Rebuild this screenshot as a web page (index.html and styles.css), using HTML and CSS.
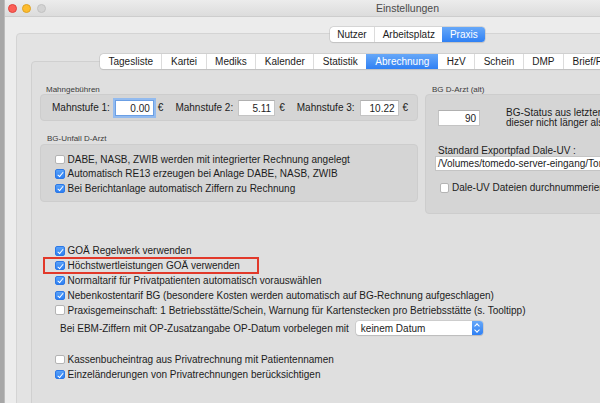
FILE: index.html
```
<!doctype html>
<html>
	<head>
		<title>Einstellungen</title>
		<meta charset="utf-8">
	<link rel="stylesheet" href="styles.css">
	</head>
	<body>
		<div class="window">
			<div class="titlebar">
				<div class="lights">
					<span class="light red"></span>
					<span class="light yellow"></span>
					<span class="light off"></span>
				</div>
				<div class="title">Einstellungen</div>
				<div></div>
			</div>

			<div class="pane">
				<div class="seg">
					<span>Nutzer</span>
					<span>Arbeitsplatz</span>
					<span class="sel">Praxis</span>
				</div>

				<div class="tabview">
					<div class="tabs">
						<span>Tagesliste</span>
						<span>Kartei</span>
						<span>Mediks</span>
						<span>Kalender</span>
						<span>Statistik</span>
						<span class="sel">Abrechnung</span>
						<span>HzV</span>
						<span>Schein</span>
						<span>DMP</span>
						<span>Brief/Fax</span>
					</div>

					<div class="tabbody">
						<div class="top">
							<div class="colLeft">
								<div class="cap">Mahngebühren</div>
								<div class="grp mahn">
									<span class="lbl">Mahnstufe 1:</span>
									<span class="field focus" style="width:39px">0.00</span>
									<span class="eur">€</span>
									<span class="lbl">Mahnstufe 2:</span>
									<span class="field" style="width:37px">5.11</span>
									<span class="eur">€</span>
									<span class="lbl">Mahnstufe 3:</span>
									<span class="field" style="width:39px">10.22</span>
									<span class="eur">€</span>
								</div>

								<div class="cap cap2">BG-Unfall D-Arzt</div>
								<div class="grp unfall">
									<div class="row"><span class="cb"></span>DABE, NASB, ZWIB werden mit integrierter Rechnung angelegt</div>
									<div class="row"><span class="cb on"></span>Automatisch RE13 erzeugen bei Anlage DABE, NASB, ZWIB</div>
									<div class="row"><span class="cb on"></span>Bei Berichtanlage automatisch Ziffern zu Rechnung</div>
								</div>
							</div>

							<div class="colRight">
								<div class="cap">BG D-Arzt (alt)</div>
								<div class="grp dale">
									<div class="status">
										<span class="field" style="width:42px">90</span>
										<span class="statusText">BG-Status aus letzter Rechnung übernehmen, wenn<br>dieser nicht länger als 90 Tage zurückliegt</span>
									</div>
									<div class="pathLbl">Standard Exportpfad Dale-UV :</div>
									<div class="path">/Volumes/tomedo-server-eingang/Tomedo/DaleUV</div>
									<div class="row daleRow"><span class="cb"></span>Dale-UV Dateien durchnummerieren</div>
								</div>
							</div>
						</div>

						<div class="opts">
							<div class="row"><span class="cb on"></span>GOÄ Regelwerk verwenden</div>
							<div class="row hl"><span class="cb on"></span>Höchstwertleistungen GOÄ verwenden</div>
							<div class="row"><span class="cb on"></span>Normaltarif für Privatpatienten automatisch vorauswählen</div>
							<div class="row"><span class="cb on"></span>Nebenkostentarif BG (besondere Kosten werden automatisch auf BG-Rechnung aufgeschlagen)</div>
							<div class="row"><span class="cb"></span>Praxisgemeinschaft: 1 Betriebsstätte/Schein, Warnung für Kartenstecken pro Betriebsstätte (s. Tooltipp)</div>

							<div class="ebm">
								<span>Bei EBM-Ziffern mit OP-Zusatzangabe OP-Datum vorbelegen mit</span>
								<span class="popup">keinem Datum<span class="stepper"><i class="up"></i><i class="down"></i></span></span>
							</div>

							<div class="row kasse"><span class="cb"></span>Kassenbucheintrag aus Privatrechnung mit Patientennamen</div>
							<div class="row einzel"><span class="cb on"></span>Einzeländerungen von Privatrechnungen berücksichtigen</div>
						</div>
					</div>
				</div>
			</div>
		</div>
	</body>
</html>
```

FILE: styles.css
```
html, body{
	margin:0px;
	padding:0px;
	height:403px;
	overflow:hidden;
}

body{
	background:#a7a7a7;
	font-family:"Liberation Sans", Arial, sans-serif;
	color:#1c1c1c;
}

/** Fenster **/
.window{
	margin-left:4px;
	width:806px;
	height:403px;
	background:#ececec;
	border-left:1px solid #bcbcbc;
	box-sizing:border-box;
}

.titlebar{
	height:17px;
	display:grid;
	grid-template-columns:1fr auto 1fr;
	align-items:center;
	background:linear-gradient(#ececec, #dcdcdc);
	border-bottom:1px solid #cdcdcd;
	box-sizing:border-box;
	font-size:10.5px;
	color:#4a4a4a;
}
.lights{
	display:flex;
	gap:5.5px;
	padding-left:2.5px;
}
.light{
	width:9px;
	height:9px;
	border-radius:50%;
	box-sizing:border-box;
}
.red{ background:#fc5f57; border:0.5px solid #e0443e; }
.yellow{ background:#fdbc2e; border:0.5px solid #dea123; }
.off{ background:#d3d3d3; border:0.5px solid #c2c2c2; }

/** aeussere Tabview (Nutzer / Arbeitsplatz / Praxis) **/
.pane{
	margin:16px 11px 0;
	height:400px;
	background:#e3e3e3;
	border:1px solid #d4d4d4;
	border-radius:4px;
}

.seg{
	display:flex;
	width:max-content;
	margin:-7px auto 0;
	height:15px;
	background:#fff;
	border-radius:3.5px;
	box-shadow:0 0 0 0.5px #bdbdbd, 0 1px 1px rgba(0,0,0,0.12);
	font-size:10px;
}
.seg span{
	padding:0 7.5px;
	line-height:15px;
	border-left:1px solid #dcdcdc;
}
.seg span:first-child{ border-left:0; }
.seg .sel{
	background:linear-gradient(#67a8f8, #2f80f4);
	color:#fff;
	border-left:0;
	border-radius:0 3.5px 3.5px 0;
}

/** innere Tabview **/
.tabview{
	margin:19px 0 0 14px;
	height:400px;
	background:#dfdfdf;
	border:1px solid #d0d0d0;
	border-radius:4px;
}

.tabs{
	display:flex;
	width:max-content;
	margin:-8px 0 0 68px;
	height:15px;
	background:#fff;
	border-radius:3.5px;
	box-shadow:0 0 0 0.5px #bdbdbd, 0 1px 1px rgba(0,0,0,0.12);
	font-size:10px;
}
.tabs span{
	padding:0 8.5px;
	line-height:15px;
	border-left:1px solid #dcdcdc;
}
.tabs span:first-child{ border-left:0; }
.tabs .sel{
	padding:0 9px;
	background:linear-gradient(#67a8f8, #2f80f4);
	color:#fff;
	border-left:0;
}
.tabs .sel + span{ border-left:0; }

.tabbody{
	padding:16px 0 0 8px;
	font-size:10px;
}

.top{
	display:grid;
	grid-template-columns:378px 1fr;
	column-gap:7px;
}

.cap{
	font-size:8px;
	line-height:9px;
	color:#3b3b3b;
	padding-left:6px;
}
.cap2{
	margin:13px 0 1px;
	padding-left:7px;
}
.colRight .cap{ padding-left:7px; }

.grp{
	background:#d5d5d5;
	border:1px solid #cdcdcd;
	border-radius:4px;
	box-sizing:border-box;
}

/** Mahngebuehren **/
.mahn{
	height:27px;
	display:flex;
	align-items:center;
	padding-left:11px;
	white-space:nowrap;
}
.mahn > span{ flex:none; }
.lbl{ margin-right:5px; }
.eur{ margin:0 12px 0 4px; }

.field{
	display:inline-block;
	height:16px;
	line-height:16px;
	background:#fff;
	border:1px solid #c4c4c4;
	border-top-color:#b0b0b0;
	box-sizing:border-box;
	text-align:right;
	padding-right:3px;
}
.focus{
	border-color:#6b9fe4;
	box-shadow:0 0 0 2px #93bbef;
}

/** Checkbox-Zeilen **/
.row{
	display:flex;
	align-items:center;
	gap:3px;
	height:14.5px;
	white-space:nowrap;
}
.cb{
	position:relative;
	flex:none;
	width:9.5px;
	height:9.5px;
	background:#fff;
	border:0.5px solid #b4b4b4;
	border-radius:2px;
	box-sizing:border-box;
}
.cb.on{
	background:linear-gradient(#5aa2f8, #2c7ff3);
	border-color:#2c78e6;
}
.cb.on::after{
	content:'';
	position:absolute;
	left:2.8px;
	top:0.7px;
	width:2.2px;
	height:4.8px;
	border:solid #fff;
	border-width:0 1.4px 1.4px 0;
	transform:rotate(40deg);
}

.unfall{
	height:58px;
	padding:7px 0 0 14px;
}

/** BG D-Arzt (alt) **/
.dale{
	height:120px;
	padding:12.5px 0 0 12px;
}
.status{
	display:flex;
	align-items:center;
	gap:26px;
}
.statusText{
	line-height:10.5px;
	white-space:nowrap;
}
.pathLbl{
	margin-top:16px;
	line-height:11px;
}
.path{
	margin:0 0 0 -3px;
	width:320px;
	height:13px;
	line-height:13px;
	padding-left:2px;
	background:#fff;
	border:1px solid #c4c4c4;
	white-space:nowrap;
}
.daleRow{
	margin:10px 0 0 1.5px;
}

/** Optionen unten **/
.opts{
	margin-top:29.5px;
	padding-left:15px;
}
.opts .row{ height:14.8px; }

.hl{ position:relative; }
.hl::before{
	content:'';
	position:absolute;
	left:-12px;
	top:-1px;
	width:216px;
	height:16.5px;
	border:2.5px solid #e2392a;
	box-sizing:border-box;
}

.ebm{
	display:flex;
	align-items:center;
	gap:7px;
	height:15px;
	margin-top:3.4px;
	padding-left:5px;
	white-space:nowrap;
}
.popup{
	position:relative;
	display:flex;
	align-items:center;
	width:127px;
	height:14px;
	padding-left:5px;
	box-sizing:border-box;
	background:#fff;
	border-radius:3px;
	box-shadow:0 0 0 0.5px #bcbcbc, 0 1px 1px rgba(0,0,0,0.15);
}
.stepper{
	margin-left:auto;
	width:11px;
	height:14px;
	border-radius:0 3px 3px 0;
	background:linear-gradient(#67a8f8, #2f80f4);
	display:flex;
	flex-direction:column;
	align-items:center;
	justify-content:center;
	gap:2px;
}
.stepper i{
	width:3px;
	height:3px;
	border:solid #fff;
	border-width:1px 0 0 1px;
}
.stepper .up{ transform:translateY(1px) rotate(45deg); }
.stepper .down{ transform:translateY(-1px) rotate(-135deg); }

.kasse{ margin-top:16px; }
.opts .einzel{ height:16px; }
```
